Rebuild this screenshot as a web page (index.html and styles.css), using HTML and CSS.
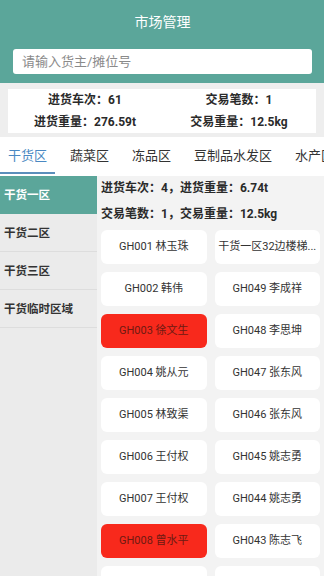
FILE: index.html
```html
<!DOCTYPE html>
<html lang="zh-CN">
<head>
<meta charset="utf-8">
<meta name="viewport" content="width=device-width, initial-scale=1">
<title>市场管理</title>
<link rel="stylesheet" href="styles.css">
</head>
<body>
<div class="page">
  <header class="header">
    <div class="title">市场管理</div>
    <div class="search"><span class="placeholder">请输入货主/摊位号</span></div>
  </header>

  <section class="stats">
    <div class="stat">进货车次：61</div>
    <div class="stat">交易笔数：1</div>
    <div class="stat">进货重量：276.59t</div>
    <div class="stat">交易重量：12.5kg</div>
  </section>

  <nav class="tabs">
    <div class="tab active">干货区</div>
    <div class="tab">蔬菜区</div>
    <div class="tab">冻品区</div>
    <div class="tab">豆制品水发区</div>
    <div class="tab">水产区</div>
  </nav>

  <main class="main">
    <aside class="side">
      <div class="side-item active">干货一区</div>
      <div class="side-item">干货二区</div>
      <div class="side-item">干货三区</div>
      <div class="side-item">干货临时区域</div>
    </aside>
    <section class="content">
      <div class="summary">
        <div class="sum-line">进货车次：4，进货重量：6.74t</div>
        <div class="sum-line">交易笔数：1，交易重量：12.5kg</div>
      </div>
      <div class="grid">
        <div class="cell">GH001 林玉珠</div>
        <div class="cell">干货一区32边楼梯...</div>
        <div class="cell">GH002 韩伟</div>
        <div class="cell">GH049 李成祥</div>
        <div class="cell red">GH003 徐文生</div>
        <div class="cell">GH048 李思坤</div>
        <div class="cell">GH004 姚从元</div>
        <div class="cell">GH047 张东风</div>
        <div class="cell">GH005 林致渠</div>
        <div class="cell">GH046 张东风</div>
        <div class="cell">GH006 王付权</div>
        <div class="cell">GH045 姚志勇</div>
        <div class="cell">GH007 王付权</div>
        <div class="cell">GH044 姚志勇</div>
        <div class="cell red">GH008 曾水平</div>
        <div class="cell">GH043 陈志飞</div>
        <div class="cell">GH009 陈志明</div>
        <div class="cell">GH042 林水生</div>
      </div>
    </section>
  </main>
</div>
</body>
</html>
```

FILE: styles.css
```css
* { box-sizing: border-box; margin: 0; padding: 0; }

html, body {
  width: 324px;
  height: 576px;
  overflow: hidden;
}

body {
  font-family: Roboto, "Noto Sans CJK SC", "Noto Sans", sans-serif;
  color: #333;
  background: #eeeeee;
}

.page {
  display: flex;
  flex-direction: column;
  height: 576px;
}

.header {
  background: #5ba69a;
  padding: 0 12px 9px 13px;
}

.title {
  height: 44px;
  line-height: 45px;
  text-align: center;
  color: #fff;
  font-size: 14px;
}

.search {
  margin-top: 5px;
  height: 25px;
  background: #fff;
  border-radius: 3px;
  padding-left: 9px;
  display: flex;
  align-items: center;
}

.placeholder {
  font-size: 13px;
  color: #8a8a8a;
  line-height: 25px;
}

.stats {
  margin: 6px 8px 0 8px;
  background: #fff;
  display: grid;
  grid-template-columns: 1fr 1fr;
  height: 44px;
}

.stat {
  height: 22px;
  line-height: 22px;
  text-align: center;
  font-size: 12px;
  font-weight: 700;
  color: #2a2a2a;
}

.tabs {
  margin-top: 4px;
  background: #fff;
  height: 39px;
  display: flex;
  gap: 23px;
  padding-left: 8px;
  white-space: nowrap;
  overflow: hidden;
}

.tab {
  position: relative;
  flex: none;
  font-size: 13px;
  line-height: 38px;
  color: #333;
}

.tab.active {
  color: #4a88c2;
}

.tab.active::after {
  content: "";
  position: absolute;
  left: -8px;
  right: -8px;
  bottom: 2px;
  height: 2px;
  background: #5b8fbb;
}

.main {
  flex: 1;
  display: flex;
  min-height: 0;
}

.side {
  width: 97px;
  flex: none;
  background: #ebebeb;
}

.side-item {
  height: 38px;
  padding-top: 2px;
  line-height: 35px;
  padding-left: 4px;
  font-size: 11.5px;
  font-weight: 700;
  color: #333;
  border-bottom: 1px solid #dddddd;
}

.side-item.active {
  background: #5ba69a;
  color: #fff;
  border-bottom-color: #5ba69a;
}

.content {
  flex: 1;
  background: #f3f3f3;
  padding: 0 4px;
  min-width: 0;
}

.sum-line {
  height: 26px;
  line-height: 25px;
  font-size: 12px;
  font-weight: 700;
  color: #2a2a2a;
  white-space: nowrap;
}

.grid {
  margin-top: 2px;
  display: grid;
  grid-template-columns: 1fr 1fr;
  grid-auto-rows: 34px;
  gap: 8px;
}

.cell {
  background: #fff;
  border-radius: 6px;
  font-size: 11px;
  line-height: 34px;
  text-align: center;
  color: #333;
  padding: 0 1px;
  white-space: nowrap;
  overflow: hidden;
  text-overflow: ellipsis;
}

.cell.red {
  background: #f8291c;
  color: #6e1a12;
}
```
